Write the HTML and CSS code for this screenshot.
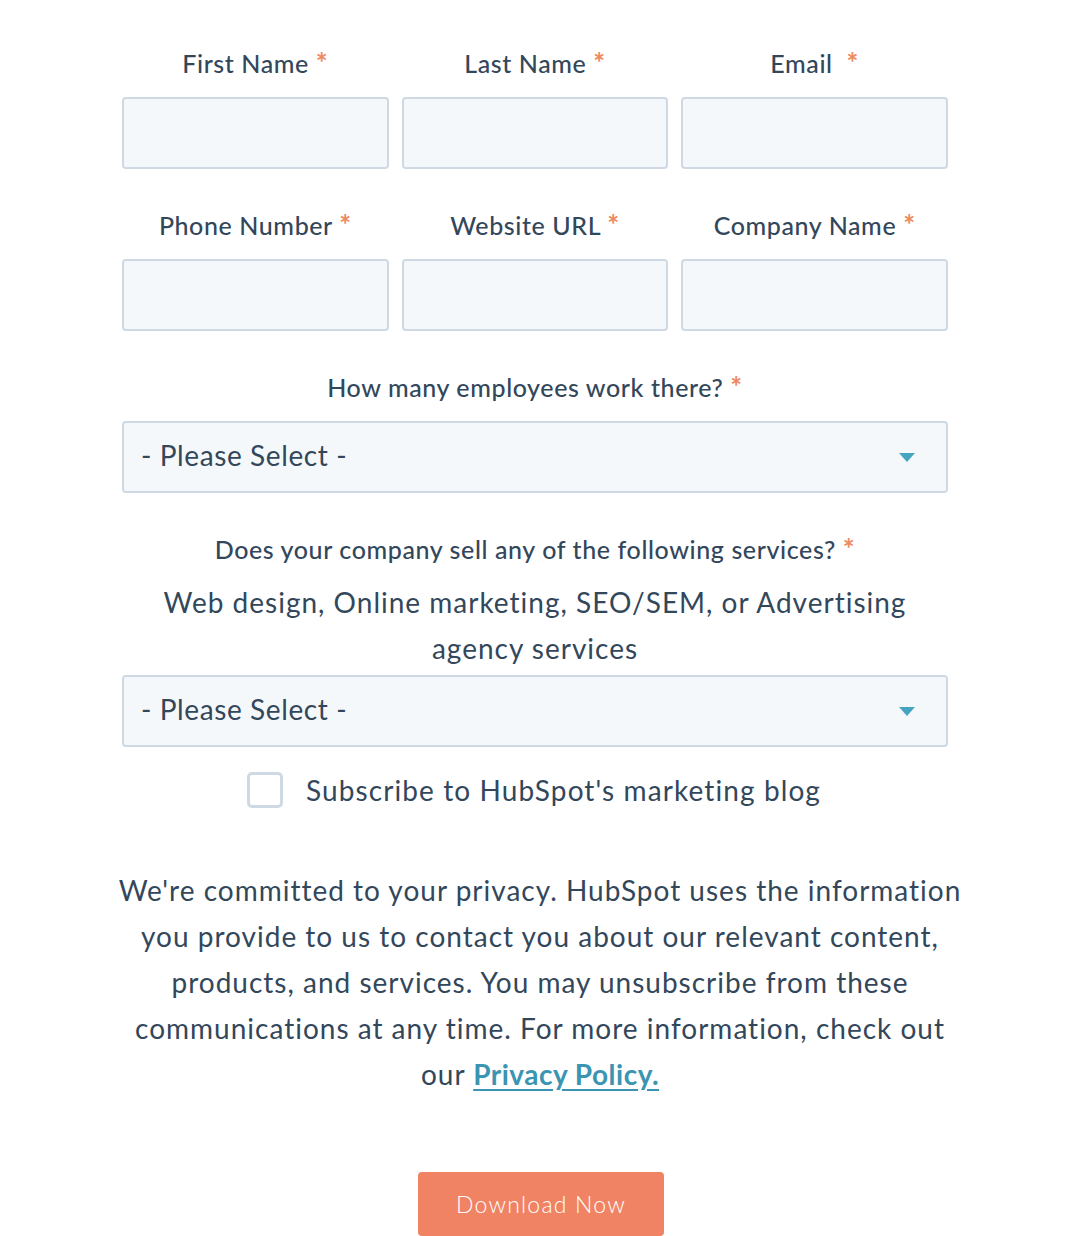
FILE: index.html
```html
<!DOCTYPE html>
<html>
<head>
<meta charset="utf-8">
<link rel="stylesheet" href="styles.css">
</head>
<body>
<form class="form">
  <div class="grid">
    <div class="field">
      <label class="label">First Name <span class="req">*</span></label>
      <div class="input"></div>
    </div>
    <div class="field">
      <label class="label">Last Name <span class="req">*</span></label>
      <div class="input"></div>
    </div>
    <div class="field">
      <label class="label">Email&nbsp; <span class="req">*</span></label>
      <div class="input"></div>
    </div>
    <div class="field">
      <label class="label">Phone Number <span class="req">*</span></label>
      <div class="input"></div>
    </div>
    <div class="field">
      <label class="label">Website URL <span class="req">*</span></label>
      <div class="input"></div>
    </div>
    <div class="field">
      <label class="label">Company Name <span class="req">*</span></label>
      <div class="input"></div>
    </div>
  </div>

  <div class="field">
    <label class="label">How many employees work there? <span class="req">*</span></label>
    <div class="input select">
      <span>- Please Select -</span>
      <svg class="caret" width="16" height="9" viewBox="0 0 16 9"><path d="M0 0H16L8 9Z" fill="#45a5c1"/></svg>
    </div>
  </div>

  <div class="field field-last">
    <label class="label">Does your company sell any of the following services? <span class="req">*</span></label>
    <p class="desc">Web design, Online marketing, SEO/SEM, or Advertising agency services</p>
    <div class="input select">
      <span>- Please Select -</span>
      <svg class="caret" width="16" height="9" viewBox="0 0 16 9"><path d="M0 0H16L8 9Z" fill="#45a5c1"/></svg>
    </div>
  </div>

  <div class="check-row">
    <span class="checkbox"></span>
    <span class="check-text">Subscribe to HubSpot's marketing blog</span>
  </div>

  <p class="privacy">We're committed to your privacy. HubSpot uses the information you provide to us to contact you about our relevant content, products, and services. You may unsubscribe from these communications at any time. For more information, check out our <a class="link" href="#">Privacy Policy.</a></p>

  <div class="actions">
    <button type="button" class="btn">Download Now</button>
  </div>
</form>
</body>
</html>
```

FILE: styles.css
```css
html, body {
  margin: 0;
  padding: 0;
  background: #ffffff;
}
body {
  font-family: "Lato", "Noto Sans", sans-serif;
  color: #33475b;
  padding-top: 46px;
}
.form {
  width: 826px;
  margin-left: 122px;
}
.grid {
  display: grid;
  grid-template-columns: 1fr 1fr 1fr;
  column-gap: 13px;
}
.field {
  margin-bottom: 39px;
}
.field-last {
  margin-bottom: 25px;
}
.label {
  display: block;
  text-align: center;
  font-size: 25px;
  font-weight: 500;
  letter-spacing: 0.6px;
  line-height: 34px;
  margin-bottom: 17px;
}
.req {
  color: #ee8a5f;
  font-weight: 700;
  font-size: 28px;
  line-height: 0;
}
.input {
  box-sizing: border-box;
  height: 72px;
  background: #f5f8fa;
  border: 2px solid #cfd9e4;
  border-radius: 4px;
}
.select {
  display: flex;
  align-items: center;
  justify-content: space-between;
  padding: 0 31px 4px 17px;
  font-size: 28px;
  letter-spacing: 0.6px;
}
.caret {
  display: block;
  margin-top: 4px;
}
.desc {
  margin: -4px 0 4px;
  text-align: center;
  font-size: 28px;
  letter-spacing: 1px;
  line-height: 46px;
  padding: 0 20px;
}
.check-row {
  display: flex;
  justify-content: center;
  align-items: center;
  gap: 23px;
  margin-left: -2px;
}
.checkbox {
  box-sizing: border-box;
  width: 36px;
  height: 36px;
  border: 3px solid #cfd9e4;
  border-radius: 5px;
  background: #fff;
}
.check-text {
  font-size: 28px;
  letter-spacing: 1.1px;
  line-height: 36px;
}
.privacy {
  margin: 59px -15px 0 -5px;
  text-align: center;
  font-size: 28px;
  letter-spacing: 1px;
  line-height: 46px;
}
.link {
  color: #3b95b2;
  font-weight: 700;
  letter-spacing: 0.5px;
  text-decoration: underline;
  text-underline-offset: 4px;
}
.actions {
  display: flex;
  justify-content: center;
  margin-top: 75px;
  margin-left: 12px;
}
.btn {
  width: 246px;
  height: 64px;
  border: 0;
  border-radius: 4px;
  background: #f08363;
  color: #ffffff;
  font-family: "Lato", "Noto Sans", sans-serif;
  font-size: 23px;
  font-weight: 300;
  letter-spacing: 1.2px;
  padding: 0;
}
```
